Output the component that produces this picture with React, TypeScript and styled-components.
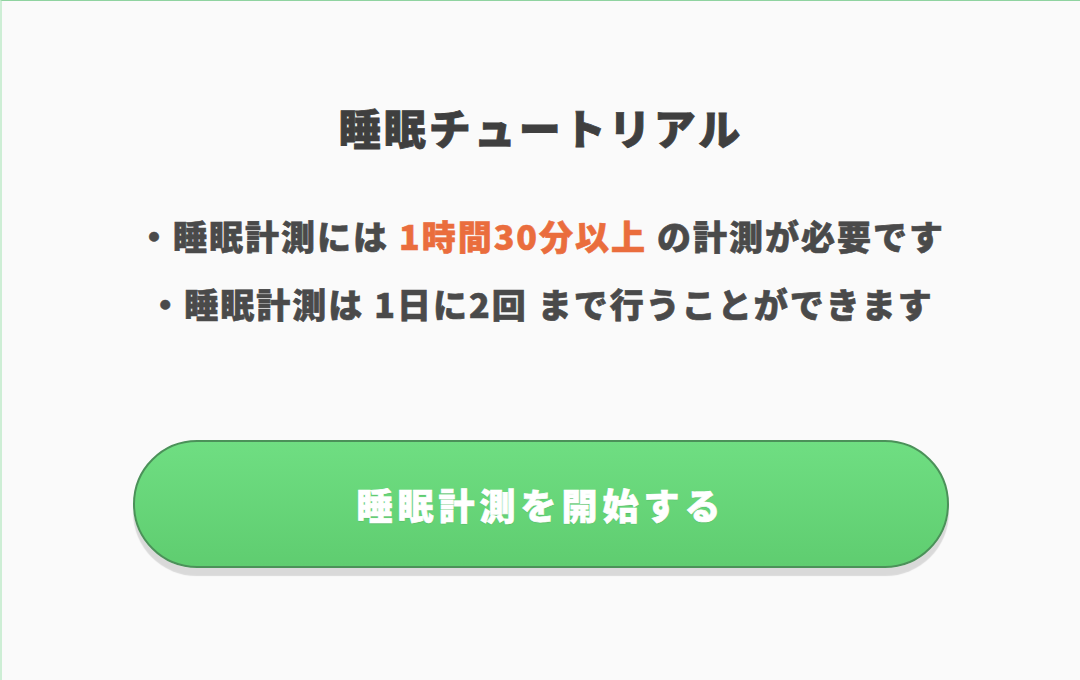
import styled, { createGlobalStyle } from "styled-components";

const GlobalStyle = createGlobalStyle`
  html, body {
    margin: 0;
    padding: 0;
    background: #fafafa;
  }
  body {
    font-family: "Noto Sans CJK JP", "Noto Sans", sans-serif;
  }
`;

const Screen = styled.div`
  box-sizing: border-box;
  width: 1080px;
  height: 680px;
  background: #fafafa;
  border-top: 1px solid #8fd3a0;
  border-left: 2px solid #cdeed5;
  display: flex;
  flex-direction: column;
  align-items: center;
  padding-top: 101px;
  overflow: hidden;
`;

const Title = styled.h1`
  margin: 0;
  font-size: 42px;
  line-height: 50px;
  font-weight: 900;
  letter-spacing: 3px;
  color: #3f3f3f;
  -webkit-text-stroke: 0.8px #3f3f3f;
`;

const Notes = styled.ul`
  list-style: none;
  margin: 50px 0 0;
  padding: 0;
  display: flex;
  flex-direction: column;
  align-items: center;
`;

const Note = styled.li`
  font-size: 34px;
  line-height: 68px;
  font-weight: 900;
  letter-spacing: 2px;
  color: #4a4a4a;
  -webkit-text-stroke: 0.6px currentColor;
  white-space: nowrap;
`;

const Accent = styled.span<{ $orange?: boolean }>`
  color: ${(p) => (p.$orange ? "#ea6d3d" : "inherit")};
  margin: 0 10px;
`;

const StartButton = styled.button`
  margin-top: 102px;
  width: 816px;
  height: 128px;
  border-radius: 64px;
  border: 2px solid #4b9159;
  background: linear-gradient(#6fde82, #5fcd70);
  box-shadow: 0 8px 1px rgba(0, 0, 0, 0.13);
  color: #ffffff;
  font-family: "Noto Sans CJK JP", "Noto Sans", sans-serif;
  font-size: 36px;
  font-weight: 900;
  letter-spacing: 5px;
  -webkit-text-stroke: 0.7px #ffffff;
  text-shadow: 0 1px 1px rgba(0, 0, 0, 0.12);
  cursor: pointer;
`;

export default function App() {
  return (
    <>
      <GlobalStyle />
      <Screen>
        <Title>睡眠チュートリアル</Title>
        <Notes>
          <Note>
            ・睡眠計測には<Accent $orange>1時間30分以上</Accent>の計測が必要です
          </Note>
          <Note>
            ・睡眠計測は<Accent>1日に2回</Accent>まで行うことができます
          </Note>
        </Notes>
        <StartButton>睡眠計測を開始する</StartButton>
      </Screen>
    </>
  );
}
